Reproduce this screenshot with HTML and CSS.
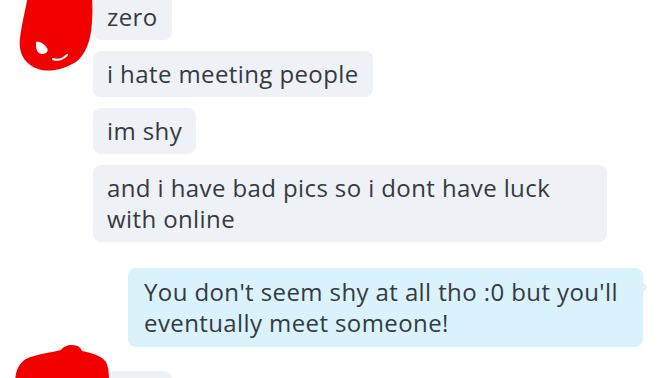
FILE: index.html
```html
<!DOCTYPE html>
<html lang="en">
<head>
  <meta charset="UTF-8">
  <meta name="viewport" content="width=device-width, initial-scale=1.0">
  <title>Chat</title>
  <link rel="stylesheet" href="styles.css">
</head>
<body>
  <div class="chat">
    <div class="group group-in first">
      <div class="avatar">
        <svg class="scribble scribble-top" width="100" height="80" viewBox="0 -5 100 80">
          <path d="M28,-5 C26,8 22,22 20,38 C18,52 24,64 38,69 C50,73 64,69 76,62 C86,54 91,40 92,22 C93,10 92,0 92,-5 Z" fill="#f20000"/>
          <path d="M36,42 C40,41 44,44 47,48 C49,51 46,54 42,54 C38,54 36,50 36,46 Z" fill="#fff"/>
          <path d="M53,59 C58,61 63,59 67,55" stroke="#fff" stroke-width="2" fill="none" stroke-linecap="round"/>
        </svg>
      </div>
      <div class="msgs">
        <div class="bubble">zero</div>
        <div class="bubble">i hate meeting people</div>
        <div class="bubble">im shy</div>
        <div class="bubble">and i have bad pics so i dont have luck with online</div>
      </div>
    </div>

    <div class="group group-out">
      <div class="msgs">
        <div class="bubble bubble-out">You don't seem shy at all tho :0 but you'll eventually meet someone!</div>
      </div>
    </div>

    <div class="group group-in">
      <div class="avatar">
        <svg class="scribble scribble-bottom" width="112" height="40" viewBox="0 345 112 40">
          <path d="M15,385 C15,372 18,364 26,359 C36,354 50,353 61,350 C63,347 67,345 72,345 C78,345 81,348 82,351 C92,353 102,356 106,362 C109,368 109,376 109,385 Z" fill="#f20000"/>
        </svg>
      </div>
      <div class="msgs">
        <div class="bubble bubble-empty"></div>
      </div>
    </div>
  </div>
</body>
</html>
```

FILE: styles.css
```css
body{
  margin: 0;
  background-color: #fff;
  font-family: "Open Sans", "Noto Sans", sans-serif;
  color: #363a40;
  overflow: hidden;
}
.chat{
  width: 672px;
  height: 378px;
  overflow: hidden;
}
.group{
  display: flex;
  margin-top: 26px;
}
.group.first{
  margin-top: -6px;
}
.group-out{
  justify-content: flex-end;
  padding-right: 29px;
}
.group-out + .group-in{
  margin-top: 24px;
}
.avatar{
  width: 93px;
  flex-shrink: 0;
  position: relative;
}
.scribble{
  position: absolute;
  left: 0;
  display: block;
}
.scribble-top{
  top: 1px;
}
.scribble-bottom{
  top: -26px;
}
.msgs{
  display: flex;
  flex-direction: column;
  align-items: flex-start;
  gap: 11px;
}
.group-out .msgs{
  align-items: flex-end;
}
.bubble{
  max-width: 486px;
  padding: 7px 14px 8px;
  font-size: 24px;
  letter-spacing: 0.4px;
  line-height: 31px;
  background-color: #eef1f6;
  border-radius: 8px;
}
.bubble-empty{
  width: 51px;
  height: 31px;
}
.bubble-out{
  position: relative;
  max-width: 483px;
  padding: 8px 16px 9px;
  background-color: #d9f2fc;
}
.bubble-out::after{
  content: '';
  position: absolute;
  right: -3px;
  top: 15px;
  width: 8px;
  height: 8px;
  background-color: #d9f2fc;
  border-radius: 2px;
  transform: rotate(45deg);
}
```
